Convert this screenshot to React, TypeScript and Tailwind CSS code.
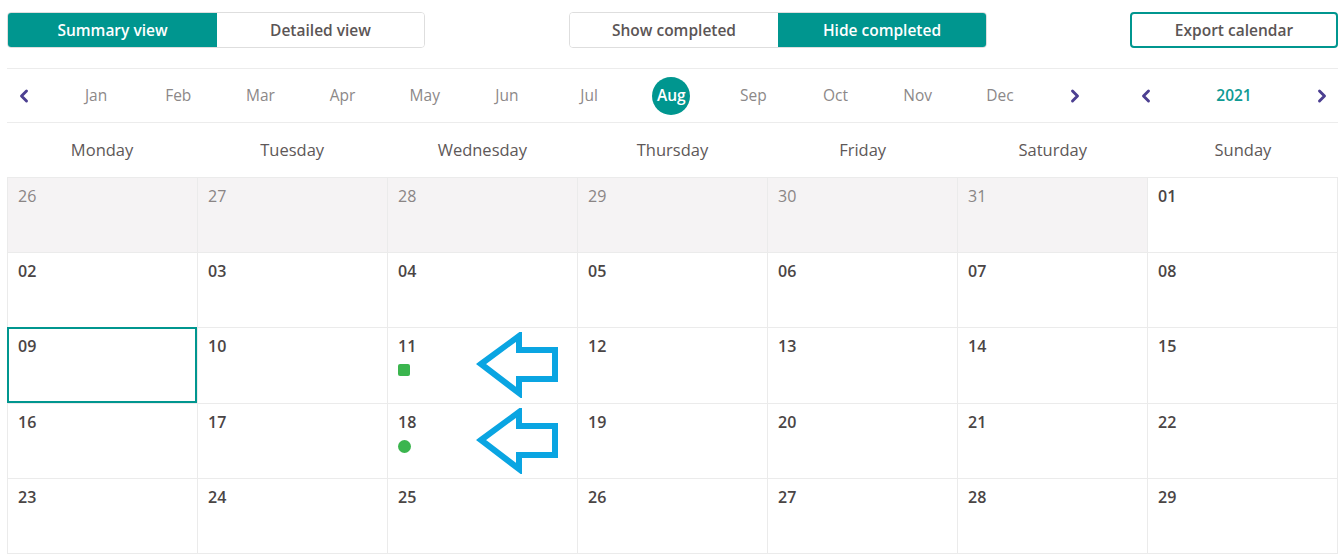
import { ChevronLeft, ChevronRight } from "lucide-react";

const MONTHS = ["Jan", "Feb", "Mar", "Apr", "May", "Jun", "Jul", "Aug", "Sep", "Oct", "Nov", "Dec"];
const DAYS = ["Monday", "Tuesday", "Wednesday", "Thursday", "Friday", "Saturday", "Sunday"];

type Cell = { day: string; outside?: boolean; selected?: boolean; marker?: "square" | "dot"; arrow?: boolean };

const weeks: Cell[][] = [
  [
    { day: "26", outside: true },
    { day: "27", outside: true },
    { day: "28", outside: true },
    { day: "29", outside: true },
    { day: "30", outside: true },
    { day: "31", outside: true },
    { day: "01" },
  ],
  ["02", "03", "04", "05", "06", "07", "08"].map((d) => ({ day: d })),
  [
    { day: "09", selected: true },
    { day: "10" },
    { day: "11", marker: "square", arrow: true },
    { day: "12" },
    { day: "13" },
    { day: "14" },
    { day: "15" },
  ],
  [
    { day: "16" },
    { day: "17" },
    { day: "18", marker: "dot", arrow: true },
    { day: "19" },
    { day: "20" },
    { day: "21" },
    { day: "22" },
  ],
  ["23", "24", "25", "26", "27", "28", "29"].map((d) => ({ day: d })),
];

function Arrow() {
  return (
    <svg
      className="absolute left-[88px] top-[4px]"
      width="84"
      height="66"
      viewBox="0 0 84 66"
    >
      <path
        d="M5 32 L43 4 L43 18 L79 18 L79 47 L43 47 L43 61 Z"
        fill="white"
        stroke="#0aa5e2"
        strokeWidth="6"
        strokeLinejoin="miter"
      />
    </svg>
  );
}

function DayCell({ cell }: { cell: Cell }) {
  return (
    <div
      className={`relative h-[75.2px] border-r border-b border-[#ebebeb] ${
        cell.outside ? "bg-[#f5f3f4]" : "bg-white"
      }`}
    >
      {cell.selected ? (
        <div className="absolute -left-px -top-px right-0 bottom-0 border-2 border-[#00968f]" />
      ) : null}
      <div
        className={`relative pl-[10px] pt-[7px] text-[16px] leading-[22px] ${
          cell.outside ? "text-[#8a8585] font-normal" : "text-[#4a4545] font-semibold"
        }`}
      >
        {cell.day}
      </div>
      {cell.marker === "square" ? (
        <div className="ml-[10px] mt-[7px] h-[12px] w-[12px] rounded-[2px] bg-[#3bb54e]" />
      ) : null}
      {cell.marker === "dot" ? (
        <div className="ml-[10px] mt-[7px] h-[13px] w-[13px] rounded-full bg-[#3bb54e]" />
      ) : null}
      {cell.arrow ? <Arrow /> : null}
    </div>
  );
}

export default function App() {
  return (
    <div
      className="min-h-[555px] bg-white"
      style={{ fontFamily: '"Open Sans", "Liberation Sans", sans-serif' }}
    >
      <div className="ml-[7px] w-[1331px] pt-[12px]">
        {/* toolbar */}
        <div className="flex items-center justify-between">
          <div className="flex h-[36px] w-[418px] overflow-hidden rounded-[4px] border border-[#dedede] text-[15.5px] font-semibold">
            <button className="-m-px w-[211px] bg-[#00968f] pt-[2px] text-white">Summary view</button>
            <button className="flex-1 bg-white pt-[2px] text-[#5b5555]">Detailed view</button>
          </div>
          <div className="flex h-[36px] w-[418px] overflow-hidden rounded-[4px] border border-[#dedede] text-[15.5px] font-semibold">
            <button className="w-[209px] bg-white pt-[2px] text-[#5b5555]">Show completed</button>
            <button className="-m-px flex-1 bg-[#00968f] pt-[2px] text-white">Hide completed</button>
          </div>
          <button className="h-[36px] w-[208px] rounded-[4px] border-2 border-[#00968f] bg-white pt-[2px] text-[15.5px] font-semibold text-[#5b5555]">
            Export calendar
          </button>
        </div>

        {/* month / year picker */}
        <div className="mt-[20px] flex h-[55px] items-center border-y border-[#ececec]">
          <div className="flex w-[48px] pl-[7px]">
            <ChevronLeft size={20} strokeWidth={3.5} className="text-[#4c3f91]" />
          </div>
          <div className="grid w-[986px] grid-cols-12 items-center">
            {MONTHS.map((m) => (
              <div key={m} className="flex items-center justify-center">
                {m === "Aug" ? (
                  <span className="flex h-[38px] w-[38px] items-center justify-center rounded-full bg-[#00968f] text-[15.5px] font-semibold text-white">
                    {m}
                  </span>
                ) : (
                  <span className="text-[15.5px] text-[#8c8888]">{m}</span>
                )}
              </div>
            ))}
          </div>
          <div className="flex w-[68px] justify-center">
            <ChevronRight size={20} strokeWidth={3.5} className="text-[#4c3f91]" />
          </div>
          <div className="flex-1" />
          <div className="flex w-[208px] items-center justify-between px-[6px]">
            <ChevronLeft size={20} strokeWidth={3.5} className="text-[#4c3f91]" />
            <span className="text-[15.5px] font-semibold text-[#0f9a93]">2021</span>
            <ChevronRight size={20} strokeWidth={3.5} className="text-[#4c3f91]" />
          </div>
        </div>

        {/* weekday header */}
        <div className="grid h-[54px] grid-cols-7 items-center">
          {DAYS.map((d) => (
            <div key={d} className="text-center text-[16.5px] text-[#5e5858]">
              {d}
            </div>
          ))}
        </div>

        {/* month grid */}
        <div className="grid grid-cols-7 border-t border-l border-[#ebebeb]">
          {weeks.flat().map((cell, i) => (
            <DayCell key={i} cell={cell} />
          ))}
        </div>
      </div>
    </div>
  );
}
